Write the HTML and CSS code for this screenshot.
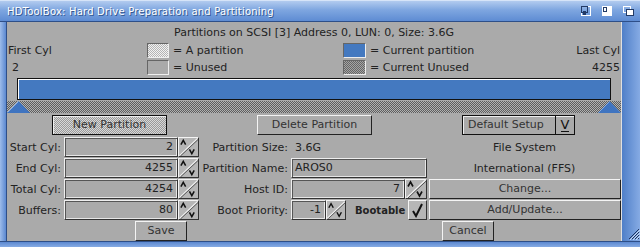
FILE: index.html
```html
<!DOCTYPE html>
<html lang="en">

<head>
    <meta charset="UTF-8">
    <title>HDToolBox</title>
    <link rel="stylesheet" href="styles.css">
</head>

<body>
    <svg width="0" height="0" class="defs">
        <symbol id="updown" viewBox="0 0 20 18">
            <path d="M0.5 18 L19.5 0" stroke="#f4f4f4" stroke-width="1.2"/>
            <path d="M1.5 18.5 L20 1.2" stroke="#505050" stroke-width="1"/>
            <polyline points="2,6.5 4.5,2 7,6.5" fill="none" stroke="#111" stroke-width="1.6"/>
            <polyline points="11,11.5 13.5,16 16,11.5" fill="none" stroke="#111" stroke-width="1.6"/>
        </symbol>
    </svg>
    <div class="window">
        <div class="titlebar">
            <span class="title">HDToolBox: Hard Drive Preparation and Partitioning</span>
            <div class="gadgets">
                <svg width="10" height="10" viewBox="0 0 10 10">
                    <rect x="0.5" y="0.5" width="9" height="9" fill="none" stroke="#fff"/>
                    <rect x="0.5" y="0.5" width="6" height="6" fill="none" stroke="#223a66"/>
                    <rect x="2" y="5" width="3" height="4" fill="#223a66"/>
                </svg>
                <svg width="10" height="10" viewBox="0 0 10 10">
                    <rect x="0" y="0" width="10" height="10" fill="#fff"/>
                    <rect x="1" y="1" width="4" height="5" fill="#223a66"/>
                    <rect x="2" y="2" width="2" height="3" fill="#fff"/>
                </svg>
                <svg width="11" height="10" viewBox="0 0 11 10">
                    <rect x="0.5" y="0.5" width="7" height="6" fill="none" stroke="#fff"/>
                    <rect x="3.5" y="3.5" width="7" height="6" fill="#fff" stroke="#223a66"/>
                </svg>
            </div>
        </div>
        <div class="frame">
            <div class="border-left"></div>
            <div class="content">
                <div class="info">Partitions on SCSI [3] Address 0, LUN: 0, Size: 3.6G</div>

                <div class="legend">
                    <span class="cyl">First Cyl</span>
                    <span class="swatch dither-light"></span>
                    <span class="key">= A partition</span>
                    <span class="swatch blue"></span>
                    <span class="key">= Current partition</span>
                    <span class="cyl right">Last Cyl</span>

                    <span class="cyl first-num">2</span>
                    <span class="swatch"></span>
                    <span class="key">= Unused</span>
                    <span class="swatch dither-dark"></span>
                    <span class="key">= Current Unused</span>
                    <span class="cyl right last-num">4255</span>
                </div>

                <div class="bar"></div>

                <div class="track">
                    <svg class="marker" width="23" height="12" viewBox="0 0 23 12">
                        <polygon points="0,12 11.5,0 23,12" fill="#3f74c0"/>
                        <polyline points="0.5,11.5 11.5,0.5" stroke="#8fb0e2" fill="none"/>
                    </svg>
                    <svg class="marker" width="23" height="12" viewBox="0 0 23 12">
                        <polygon points="0,12 11.5,0 23,12" fill="#3f74c0"/>
                        <polyline points="0.5,11.5 11.5,0.5" stroke="#8fb0e2" fill="none"/>
                    </svg>
                </div>

                <div class="actions">
                    <div class="button active">New Partition</div>
                    <div class="button">Delete Partition</div>
                    <div class="cycle">
                        <span class="cycle-text">Default Setup</span>
                        <span class="cycle-arrow"><span>V</span></span>
                    </div>
                </div>

                <div class="form">
                    <span class="label">Start Cyl:</span>
                    <span class="field num">2</span>
                    <span class="arrows"><svg><use href="#updown"/></svg></span>
                    <span class="label">Partition Size:</span>
                    <span class="value">3.6G</span>
                    <span class="side-text">File System</span>

                    <span class="label">End Cyl:</span>
                    <span class="field num">4255</span>
                    <span class="arrows"><svg><use href="#updown"/></svg></span>
                    <span class="label">Partition Name:</span>
                    <span class="field name">AROS0</span>
                    <span class="side-text">International (FFS)</span>

                    <span class="label">Total Cyl:</span>
                    <span class="field num">4254</span>
                    <span class="arrows"><svg><use href="#updown"/></svg></span>
                    <span class="label">Host ID:</span>
                    <div class="group">
                        <span class="field num host">7</span>
                        <span class="arrows wide"><svg><use href="#updown"/></svg></span>
                    </div>
                    <div class="button side">Change...</div>

                    <span class="label">Buffers:</span>
                    <span class="field num">80</span>
                    <span class="arrows"><svg><use href="#updown"/></svg></span>
                    <span class="label">Boot Priority:</span>
                    <div class="group">
                        <span class="field num prio">-1</span>
                        <span class="arrows narrow"><svg><use href="#updown"/></svg></span>
                        <span class="bootable">Bootable</span>
                        <span class="checkbox">
                            <svg width="13" height="15" viewBox="0 0 13 15">
                                <polyline points="2,8 5,13 11,1" fill="none" stroke="#111" stroke-width="2"/>
                            </svg>
                        </span>
                    </div>
                    <div class="button side">Add/Update...</div>
                </div>

                <div class="footer">
                    <div class="button small">Save</div>
                    <div class="button small">Cancel</div>
                </div>
            </div>
            <div class="border-right">
                <svg width="12" height="12" viewBox="0 0 12 12">
                    <path d="M11 1 L1 11 M11 4 L4 11 M11 7 L7 11 M11 10 L10 11" stroke="#1d3360" fill="none"/>
                    <path d="M12 2 L2 12 M12 5 L5 12 M12 8 L8 12" stroke="#c8daf4" fill="none"/>
                </svg>
            </div>
        </div>
        <div class="border-bottom"></div>
    </div>
</body>

</html>
```

FILE: styles.css
```css
body {
    margin: 0;
    font-family: "DejaVu Sans", sans-serif;
    font-size: 11px;
    color: #222;
}

.defs {
    position: absolute;
}

.window {
    width: 640px;
    height: 247px;
    display: flex;
    flex-direction: column;
    background: #5b88d0;
}

.titlebar {
    height: 22px;
    box-sizing: border-box;
    display: flex;
    align-items: center;
    justify-content: space-between;
    padding: 0 6px 0 7px;
    background: linear-gradient(#b2cbef, #7ea6e0 45%, #5e8cd3);
    border-top: 1px solid #d6e4f8;
    border-bottom: 1px solid #2e4f88;
}

.title {
    color: #fff;
    font-size: 10px;
    letter-spacing: 0.2px;
    text-shadow: 1px 1px 0 #34588f;
}

.gadgets {
    display: flex;
    align-items: center;
    gap: 11px;
}

.frame {
    flex: 1;
    display: flex;
}

.border-left {
    width: 7px;
    background: linear-gradient(90deg, #9dbcea, #5b88d0);
    border-right: 1px solid #2e4f88;
    box-sizing: border-box;
}

.border-right {
    width: 19px;
    box-sizing: border-box;
    border-left: 1px solid #e0e0e0;
    background: linear-gradient(90deg, #4f7fc8, #86abe4);
    display: flex;
    flex-direction: column;
    justify-content: flex-end;
    padding: 0 0 1px 6px;
}

.border-bottom {
    height: 6px;
    background: linear-gradient(#5b88d0, #86abe4);
    border-top: 1px solid #2e4f88;
    box-sizing: border-box;
}

.content {
    flex: 1;
    background: #aaa;
    display: flex;
    flex-direction: column;
}

.info {
    margin-top: 4px;
    height: 14px;
    line-height: 14px;
    text-align: center;
}

/* legend */
.legend {
    margin-top: 3px;
    display: grid;
    grid-template-columns: 140px 22px 174px 23px 1fr auto;
    grid-template-rows: 15px 15px;
    row-gap: 2px;
    align-items: center;
}

.cyl {
    padding-left: 1px;
}

.cyl.right {
    padding-right: 1px;
    text-align: right;
}

.first-num {
    padding-left: 5px;
}

.last-num {
    padding-right: 6px;
}

.key {
    padding-left: 4px;
}

.swatch {
    height: 15px;
    box-sizing: border-box;
    border: 1px solid;
    border-color: #666 #eee #eee #666;
    background: #aaa;
}

.swatch.blue {
    background: #4479c0;
}

.dither-light {
    background: repeating-conic-gradient(#f2f2f2 0 25%, #b4b4b4 0 50%) 0 0 / 2px 2px;
}

.swatch.dither-dark {
    background: repeating-conic-gradient(#666 0 25%, #a4a4a4 0 50%) 0 0 / 2px 2px;
}

/* partition bar */
.bar {
    margin: 3px 0 0 10px;
    width: 594px;
    height: 22px;
    box-sizing: border-box;
    border: 1px solid #111;
    background: #4479c0;
    box-shadow: inset 1px 1px 0 #fff;
}

.track {
    height: 12px;
    display: flex;
    justify-content: space-between;
    background: repeating-conic-gradient(#5e5e5e 0 25%, #b2b2b2 0 50%) 0 0 / 2px 2px;
    border-top: 1px solid #aaa;
}

.marker {
    display: block;
}

/* buttons */
.button {
    box-sizing: border-box;
    height: 20px;
    line-height: 18px;
    text-align: center;
    border: 1px solid;
    border-color: #f4f4f4 #222 #222 #f4f4f4;
    background: #acacac;
    color: #333;
}

.button.active {
    border-color: #111;
    box-shadow: inset 1px 1px 0 #eee;
    background: repeating-conic-gradient(#d8d8d8 0 25%, #9a9a9a 0 50%) 0 0 / 2px 2px;
}

.actions {
    margin-top: 2px;
    display: flex;
    gap: 90px;
    padding-left: 45px;
}

.actions .button {
    width: 115px;
}

.cycle {
    width: 113px;
    height: 20px;
    box-sizing: border-box;
    display: flex;
    border: 1px solid #111;
    box-shadow: inset 1px 1px 0 #eee;
    color: #333;
}

.cycle-text {
    flex: 1;
    line-height: 18px;
    padding-left: 5px;
}

.cycle-arrow {
    width: 18px;
    border-left: 1px solid #111;
    display: flex;
    justify-content: center;
    align-items: center;
}

.cycle-arrow span {
    font-size: 13px;
    line-height: 13px;
    color: #111;
    border-bottom: 1px solid #111;
}

/* form */
.form {
    margin-top: 2px;
    display: grid;
    grid-template-columns: 57px 114px 21px 92px 137px 193px;
    grid-template-rows: repeat(4, 20px);
    row-gap: 1px;
    align-items: center;
}

.label {
    text-align: right;
    padding-right: 3px;
}

.value {
    padding-left: 4px;
}

.side-text {
    text-align: center;
}

.field {
    height: 20px;
    box-sizing: border-box;
    line-height: 18px;
    border: 1px solid;
    border-color: #eee #333 #333 #eee;
    box-shadow: inset 1px 1px 0 #555, inset -1px -1px 0 #e6e6e6;
    background: #aaa;
    padding: 0 4px;
    color: #222;
}

.field.num {
    text-align: right;
}

.field.name {
    margin-right: 1px;
    padding-left: 3px;
}

.group {
    display: flex;
    align-items: center;
}

.field.host {
    width: 114px;
}

.field.prio {
    width: 35px;
}

.arrows {
    width: 21px;
    height: 20px;
    box-sizing: border-box;
    border: 1px solid;
    border-color: #f4f4f4 #333 #333 #f4f4f4;
    background: #b6b6b6;
    overflow: hidden;
}

.arrows.wide {
    width: 22px;
}

.arrows.narrow {
    width: 20px;
}

.arrows svg {
    display: block;
    width: 100%;
    height: 100%;
}

.bootable {
    font-size: 10px;
    font-weight: bold;
    margin-left: 9px;
    width: 53px;
}

.checkbox {
    width: 19px;
    height: 20px;
    box-sizing: border-box;
    border: 1px solid;
    border-color: #f4f4f4 #333 #333 #f4f4f4;
    background: #b6b6b6;
    display: flex;
    align-items: center;
    justify-content: center;
}

.button.side {
    margin-left: 1px;
}

.footer {
    margin-top: 1px;
    display: flex;
    padding-left: 128px;
    gap: 255px;
}

.button.small {
    width: 52px;
}
```
